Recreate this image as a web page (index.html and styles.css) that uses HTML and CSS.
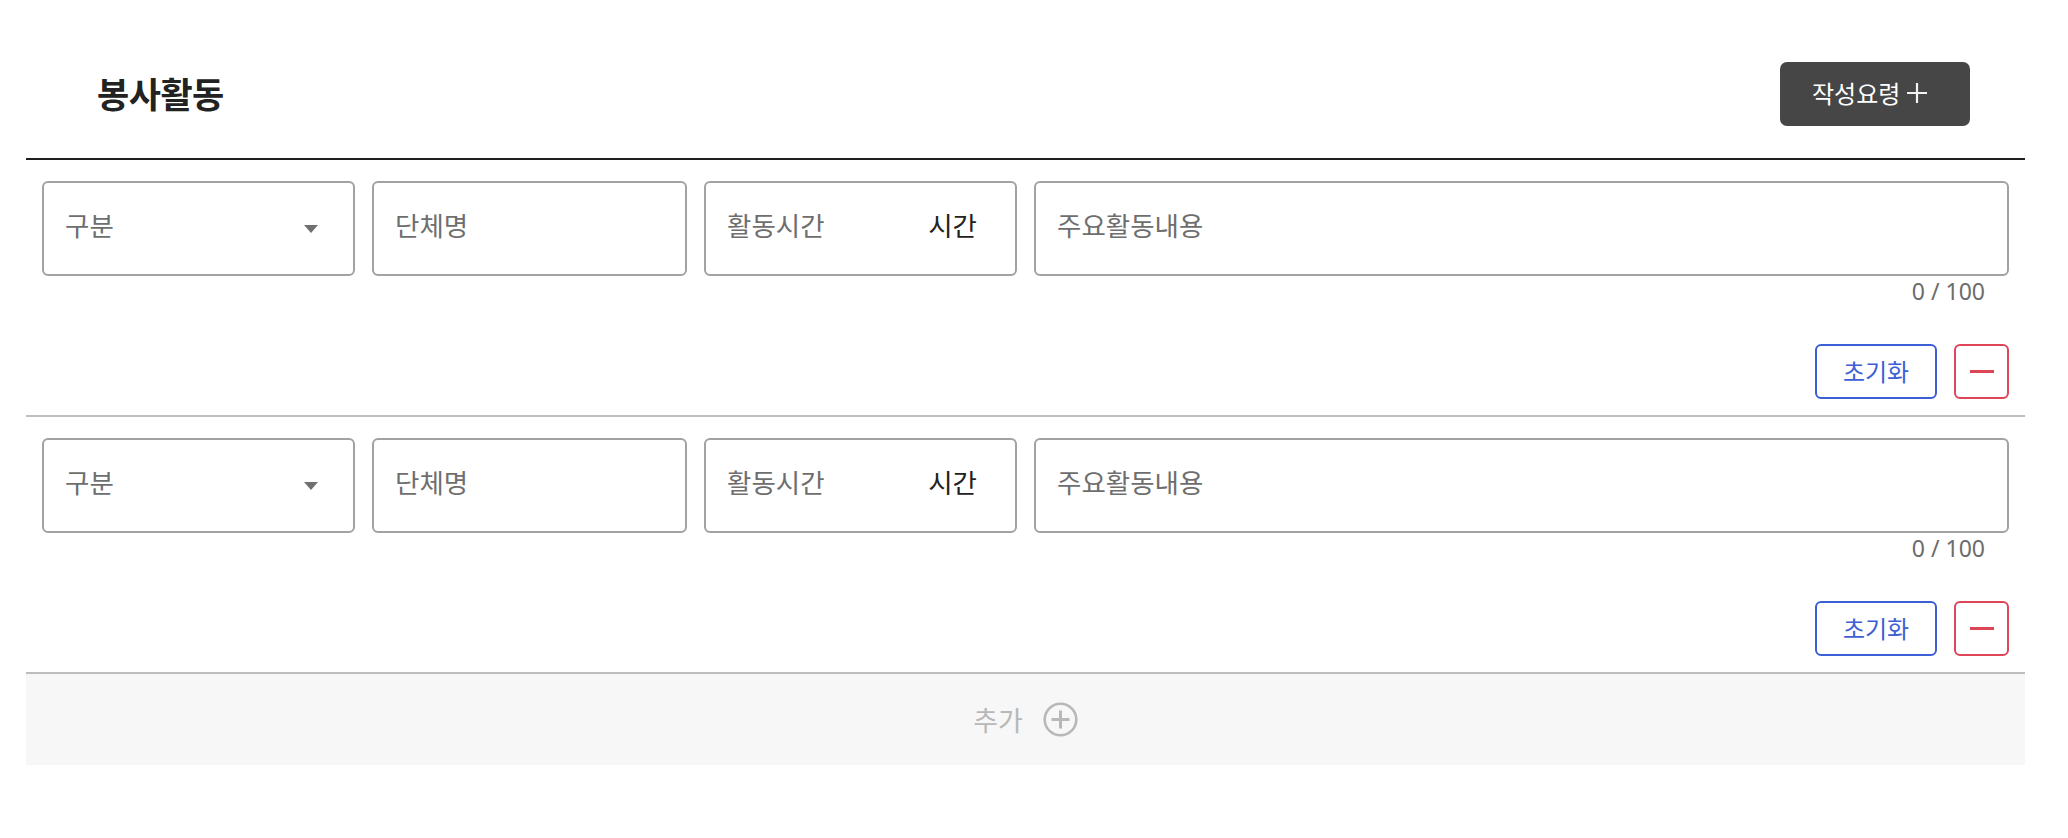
FILE: index.html
```html
<!DOCTYPE html>
<html lang="ko">
<head>
<meta charset="utf-8">
<title>봉사활동</title>
<link rel="stylesheet" href="styles.css">
</head>
<body>
<section class="section">
  <header class="head">
    <h2 class="title">봉사활동</h2>
    <button class="guide" type="button">
      <span>작성요령</span>
      <svg class="guide-plus" width="20" height="20" viewBox="0 0 20 20"><path d="M10 0V20M0 10H20" stroke="#f2f2f2" stroke-width="2.2" fill="none"/></svg>
    </button>
  </header>

  <div class="list">
    <div class="item">
      <div class="fields">
        <div class="field select"><span class="ph">구분</span><svg class="caret" width="14" height="8" viewBox="0 0 14 8"><path d="M0 0H14L7 8Z" fill="#707070"/></svg></div>
        <div class="field"><span class="ph">단체명</span></div>
        <div class="field hours"><span class="ph">활동시간</span><span class="unit">시간</span></div>
        <div class="field"><span class="ph">주요활동내용</span></div>
      </div>
      <div class="counter">0 / 100</div>
      <div class="actions">
        <button class="reset" type="button">초기화</button>
        <button class="remove" type="button"><span class="minus"></span></button>
      </div>
    </div>

    <div class="item">
      <div class="fields">
        <div class="field select"><span class="ph">구분</span><svg class="caret" width="14" height="8" viewBox="0 0 14 8"><path d="M0 0H14L7 8Z" fill="#707070"/></svg></div>
        <div class="field"><span class="ph">단체명</span></div>
        <div class="field hours"><span class="ph">활동시간</span><span class="unit">시간</span></div>
        <div class="field"><span class="ph">주요활동내용</span></div>
      </div>
      <div class="counter">0 / 100</div>
      <div class="actions">
        <button class="reset" type="button">초기화</button>
        <button class="remove" type="button"><span class="minus"></span></button>
      </div>
    </div>
  </div>

  <div class="add">
    <span>추가</span>
    <svg width="35" height="35" viewBox="0 0 35 35"><circle cx="17.5" cy="17.5" r="15.8" stroke="#b8b8b8" stroke-width="2.6" fill="none"/><path d="M17.5 8.5V26.5M8.5 17.5H26.5" stroke="#b8b8b8" stroke-width="3" fill="none"/></svg>
  </div>
</section>
</body>
</html>
```

FILE: styles.css
```css
* {
  box-sizing: border-box;
}

body {
  margin: 0;
  background: #ffffff;
  font-family: "Noto Sans CJK KR", "Noto Sans", sans-serif;
  color: #222222;
}

.section {
  margin-left: 26px;
  width: 1999px;
}

.head {
  display: flex;
  align-items: center;
  justify-content: space-between;
  padding: 62px 55px 32px 71px;
}

.title {
  margin: 0 0 2px;
  font-size: 35px;
  font-weight: 700;
  line-height: 42px;
  color: #222222;
  letter-spacing: -0.5px;
}

.guide {
  display: flex;
  align-items: center;
  gap: 7px;
  width: 190px;
  height: 64px;
  padding: 0 0 2px 32px;
  border: none;
  border-radius: 7px;
  background: #464646;
  color: #ffffff;
  font-family: inherit;
  font-size: 24px;
  line-height: 30px;
}

.guide-plus {
  display: block;
}

.list {
  border-top: 2px solid #1e1e1e;
}

.item {
  padding: 21px 16px 16px;
  border-bottom: 2px solid #bdbdbd;
}

.fields {
  display: grid;
  grid-template-columns: 313px 315px 313px 1fr;
  gap: 17px;
}

.field {
  display: flex;
  align-items: center;
  justify-content: space-between;
  height: 95px;
  padding: 0 20px 7px 21px;
  border: 2px solid #a2a2a2;
  border-radius: 6px;
  background: #ffffff;
  font-size: 26.5px;
  line-height: 34px;
}

.ph {
  color: #6e6e6e;
}

.select {
  padding-right: 35px;
}

.caret {
  display: block;
  margin-top: 7px;
}

.hours {
  padding-right: 38px;
}

.unit {
  color: #222222;
}

.counter {
  margin-top: 2px;
  padding-right: 24px;
  text-align: right;
  font-family: "Noto Sans", sans-serif;
  font-size: 23px;
  line-height: 26px;
  color: #6b6b6b;
}

.actions {
  display: flex;
  justify-content: flex-end;
  gap: 17px;
  margin-top: 40px;
}

.reset {
  width: 122px;
  height: 55px;
  padding: 0 0 2px;
  border: 2px solid #3d5fd6;
  border-radius: 6px;
  background: #ffffff;
  color: #3d5fd6;
  font-family: inherit;
  font-size: 24px;
  line-height: 30px;
}

.remove {
  display: flex;
  align-items: center;
  justify-content: center;
  width: 55px;
  height: 55px;
  padding: 0;
  border: 2px solid #de4557;
  border-radius: 6px;
  background: #ffffff;
}

.minus {
  display: block;
  width: 24px;
  height: 3px;
  background: #de4557;
}

.add {
  display: flex;
  align-items: center;
  justify-content: center;
  gap: 20px;
  height: 91px;
  background: #f7f7f7;
  color: #b8b8b8;
  font-size: 27px;
  line-height: 34px;
}

.add svg {
  display: block;
}
```
